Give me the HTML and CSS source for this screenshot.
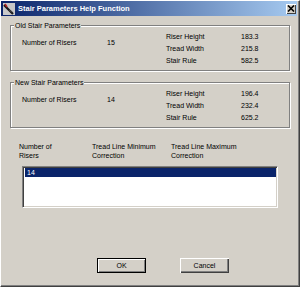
FILE: index.html
```html
<!DOCTYPE html>
<html>
<head>
    <title>Stair Parameters Help Function</title>
    <link rel="stylesheet" href="styles.css">
</head>
<body>
    <div class="window">
        <div class="titlebar">
            <svg class="app-icon" width="12" height="12" viewBox="0 0 12 12">
                <rect x="0" y="0" width="12" height="12" fill="#c8c8c8"/>
                <path d="M1 2 L10 11" stroke="#1a1a1a" stroke-width="2.2"/>
                <path d="M2 1 L4 4" stroke="#b02020" stroke-width="1.5"/>
                <path d="M6 7 L9 9" stroke="#404040" stroke-width="1.5"/>
            </svg>
            <span class="title">Stair Parameters Help Function</span>
            <button class="close-btn" type="button">
                <svg width="8" height="7" viewBox="0 0 8 7">
                    <path d="M1 0.5 L7 6.5 M7 0.5 L1 6.5" stroke="#000" stroke-width="1.6"/>
                </svg>
            </button>
        </div>

        <div class="content">
            <!-- Old values -->
            <div class="group">
                <span class="group-title">Old Stair Parameters</span>
                <div class="params">
                    <span class="risers-label">Number of Risers</span>
                    <span class="risers-value">15</span>
                    <span class="label">Riser Height</span><span class="value">183.3</span>
                    <span class="label">Tread Width</span><span class="value">215.8</span>
                    <span class="label">Stair Rule</span><span class="value">582.5</span>
                </div>
            </div>

            <!-- New values -->
            <div class="group group-new">
                <span class="group-title">New Stair Parameters</span>
                <div class="params">
                    <span class="risers-label">Number of Risers</span>
                    <span class="risers-value">14</span>
                    <span class="label">Riser Height</span><span class="value">196.4</span>
                    <span class="label">Tread Width</span><span class="value">232.4</span>
                    <span class="label">Stair Rule</span><span class="value">625.2</span>
                </div>
            </div>

            <div class="list-header">
                <span>Number of<br>Risers</span>
                <span>Tread Line Minimum<br>Correction</span>
                <span>Tread Line Maximum<br>Correction</span>
            </div>

            <div class="listbox">
                <div class="list-row selected">14</div>
            </div>

            <div class="button-row">
                <button type="button" class="btn btn-default">OK</button>
                <button type="button" class="btn">Cancel</button>
            </div>
        </div>
    </div>
</body>
</html>
```

FILE: styles.css
```css
body {
    margin: 0;
    font-family: "Liberation Sans", Arial, sans-serif;
    font-size: 7px;
    color: #000;
}

.window {
    width: 300px;
    height: 287px;
    box-sizing: border-box;
    background-color: #d4d0c8;
    border-left: 1px solid #fff;
    border-top: 1px solid #fff;
    border-right: 1px solid #404040;
    border-bottom: 1px solid #404040;
    box-shadow: inset -1px -1px 0 #808080;
}

.titlebar {
    height: 15px;
    margin: 0 2px 0 0;
    display: flex;
    align-items: center;
    background: linear-gradient(to right, #0a246a, #a6caf0);
}

.app-icon {
    margin-left: 2px;
    flex: none;
}

.title {
    margin-left: 3px;
    color: #fff;
    font-weight: bold;
    font-size: 7.5px;
    flex: 1;
}

.close-btn {
    width: 10px;
    height: 10px;
    margin-right: 1px;
    padding: 0;
    display: flex;
    align-items: center;
    justify-content: center;
    background-color: #d4d0c8;
    border: none;
    box-shadow: inset 1px 1px 0 #fff, inset -1px -1px 0 #404040;
}

.content {
    padding: 9px 9px 0 9px;
}

.group {
    position: relative;
    border: 1px solid #808080;
    box-shadow: 1px 1px 0 #fff, inset 1px 1px 0 #fff;
    padding: 5px 0 3px 11px;
}

.group-new {
    margin-top: 11px;
}

.group-title {
    position: absolute;
    top: -5px;
    left: 3px;
    padding: 0 1px;
    line-height: 9px;
    background-color: #d4d0c8;
}

.params {
    display: grid;
    grid-template-columns: 85px 59px 75px 1fr;
    grid-template-rows: repeat(3, 12px);
    line-height: 12px;
}

.risers-label {
    grid-column: 1;
    grid-row: 1 / 3;
    align-self: center;
}

.risers-value {
    grid-column: 2;
    grid-row: 1 / 3;
    align-self: center;
}

.label {
    grid-column: 3;
}

.value {
    grid-column: 4;
}

.list-header {
    display: grid;
    grid-template-columns: 73px 79px 1fr;
    margin-top: 14px;
    padding-left: 9px;
    line-height: 9px;
}

.listbox {
    margin: 6px 0 0 12px;
    width: 256px;
    height: 42px;
    box-sizing: border-box;
    background-color: #fff;
    border-top: 1px solid #808080;
    border-left: 1px solid #808080;
    border-right: 1px solid #fff;
    border-bottom: 1px solid #fff;
    box-shadow: inset 1px 1px 0 #404040, inset -1px -1px 0 #d4d0c8;
    padding: 1px 1px 0 2px;
}

.list-row {
    height: 9px;
    line-height: 9px;
    padding-left: 2px;
}

.selected {
    background-color: #0a246a;
    color: #fff;
}

.button-row {
    display: flex;
    gap: 34px;
    margin-top: 50px;
    padding-left: 87px;
}

.btn {
    width: 49px;
    height: 15px;
    padding: 0;
    font-family: "Liberation Sans", Arial, sans-serif;
    font-size: 7px;
    color: #000;
    background-color: #d4d0c8;
    border: none;
    box-shadow: inset 1px 1px 0 #fff, inset -1px -1px 0 #404040, inset -2px -2px 0 #808080;
}

.btn-default {
    border: 1px solid #000;
    box-shadow: inset 1px 1px 0 #fff, inset -1px -1px 0 #808080;
}
```
